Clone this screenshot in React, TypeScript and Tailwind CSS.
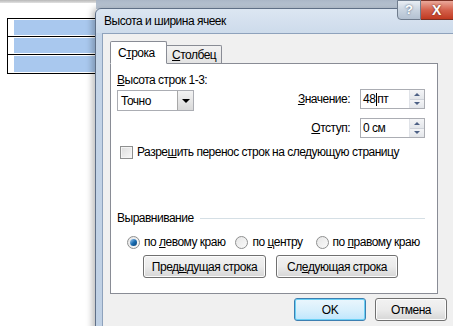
import React from "react";

const font = { fontFamily: '"Segoe UI", "Liberation Sans", Arial, sans-serif' };

const Btn = ({ children, w, focus }: { children: React.ReactNode; w: string; focus?: boolean }) => (
  <div
    className={`${w} h-[23px] rounded-[3px] border ${
      focus ? "border-[#3c7fb1]" : "border-[#707070]"
    } bg-gradient-to-b ${
      focus ? "from-[#eaf6fd] via-[#d9f0fc] to-[#bee6fd]" : "from-[#f2f2f2] via-[#ebebeb] to-[#d6d6d6]"
    } flex items-center justify-center text-[12px] text-black whitespace-nowrap ${
      focus ? "shadow-[inset_0_0_0_1px_#6ad0f5]" : "shadow-[inset_0_0_0_1px_#fcfcfc]"
    }`}
  >
    {children}
  </div>
);

const Radio = ({ on }: { on?: boolean }) => (
  <div className="w-[13px] h-[13px] shrink-0 rounded-full border border-[#8e8f8f] bg-gradient-to-br from-[#e6e6e6] to-[#fafafa] flex items-center justify-center">
    {on && <div className="w-[7px] h-[7px] rounded-full bg-gradient-to-br from-[#9fd0f5] via-[#1b6fb3] to-[#0a3f75]" />}
  </div>
);

const Spin = () => (
  <div className="w-[15px] h-full flex flex-col border-l border-[#e0e3e8]">
    <div className="flex-1 flex items-center justify-center border-b border-[#cfd3da] bg-gradient-to-b from-[#f4f5f7] to-[#e3e6ea]">
      <div className="w-0 h-0 border-l-[3px] border-r-[3px] border-b-[3px] border-l-transparent border-r-transparent border-b-[#4d6185]" />
    </div>
    <div className="flex-1 flex items-center justify-center bg-gradient-to-b from-[#f4f5f7] to-[#e3e6ea]">
      <div className="w-0 h-0 border-l-[3px] border-r-[3px] border-t-[3px] border-l-transparent border-r-transparent border-t-[#4d6185]" />
    </div>
  </div>
);

export default function App() {
  return (
    <div className="relative w-[453px] h-[326px] overflow-hidden bg-white whitespace-nowrap tracking-[-0.5px]" style={font}>
      {/* page behind */}
      <div className="h-[3px] bg-gradient-to-b from-[#b7b7b7] to-[#e2e2e2]" />
      <div className="mt-[15px] ml-[7px] w-[120px] border border-black flex flex-col">
        {[0, 1, 2].map((i) => (
          <div key={i} className={`flex h-[18px] ${i < 2 ? "border-b border-black" : ""}`}>
            <div className="w-[6px]" />
            <div className="flex-1 bg-[#a9c8ee] my-px" />
          </div>
        ))}
      </div>

      {/* dark band above the dialog */}
      <div className="absolute left-[96px] top-0 right-0 h-[9px] bg-gradient-to-b from-[#aab6c6] to-[#c7d3e2]" />

      {/* dialog */}
      <div className="absolute left-[95px] top-[8px] w-[380px] h-[340px] rounded-tl-[6px] border border-[#5f6f86] bg-gradient-to-b from-[#c5d5e8] to-[#bfd0e4] flex flex-col shadow-[-3px_0_6px_rgba(0,0,0,0.25)]">
        <div className="h-[24px] flex items-center pl-[8px] text-[12px] text-black bg-gradient-to-b from-[#dce6f2] to-[#cddbeb] rounded-tl-[6px]">
          Высота и ширина ячеек
        </div>
        <div className="flex-1 ml-[6px] border-l border-t border-[#8ea2bc] bg-[#f0f0f0] pl-[7px] pt-[7px] flex flex-col">
          {/* tabs */}
          <div className="flex items-end h-[22px] text-[12px] text-black relative z-10">
            <div className="w-[57px] h-[23px] -mb-px bg-white border border-[#898c95] border-b-white rounded-t-[2px] flex items-center pl-[7px]">
              С<u>т</u>рока
            </div>
            <div className="w-[55px] h-[18px] border border-l-0 border-b-0 border-[#898c95] rounded-tr-[2px] bg-gradient-to-b from-[#f2f2f2] to-[#e3e3e3] flex items-center pl-[5px]">
              <u>С</u>толбец
            </div>
          </div>
          {/* panel */}
          <div className="w-[328px] h-[231px] bg-white border border-[#898c95] flex flex-col pl-[6px] pr-[12px] pt-[8px] text-[12px] text-black">
            <div className="flex">
              <div className="flex flex-col">
                <div className="h-[16px] leading-[16px]">
                  <u>В</u>ысота строк 1-3:
                </div>
                <div className="mt-[2px] w-[77px] h-[21px] border border-[#abadb3] flex items-stretch">
                  <div className="flex-1 flex items-center pl-[3px]">Точно</div>
                  <div className="w-[16px] border-l border-[#a8a8a8] bg-gradient-to-b from-[#f3f3f3] to-[#d9d9d9] flex items-center justify-center">
                    <div className="w-0 h-0 border-l-[4px] border-r-[4px] border-t-[4px] border-l-transparent border-r-transparent border-t-black" />
                  </div>
                </div>
              </div>
              <div className="flex-1 flex flex-col items-end gap-[9px] mt-[17px]">
                <div className="flex items-center gap-[10px]">
                  <span>
                    <u>З</u>начение:
                  </span>
                  <div className="w-[65px] h-[20px] border border-[#abadb3] flex items-stretch">
                    <div className="flex-1 flex items-center pl-[2px]">
                      48<span className="inline-block w-px h-[13px] bg-black ml-px" />пт
                    </div>
                    <Spin />
                  </div>
                </div>
                <div className="flex items-center gap-[10px]">
                  <span>
                    <u>О</u>тступ:
                  </span>
                  <div className="w-[65px] h-[20px] border border-[#abadb3] flex items-stretch">
                    <div className="flex-1 flex items-center pl-[2px]">0 см</div>
                    <Spin />
                  </div>
                </div>
              </div>
            </div>
            <div className="flex items-center mt-[5px] ml-[3px] gap-[4px]">
              <div className="w-[13px] h-[13px] border border-[#8e8f8f] bg-gradient-to-br from-[#dcdcdc] to-[#f8f8f8] shadow-[inset_0_0_0_1px_#f4f4f4]" />
              <span>
                Разре<u>ш</u>ить перенос строк на следующую страницу
              </span>
            </div>

            <div className="flex items-center mt-[48px] gap-[6px]">
              <span>Выравнивание</span>
              <div className="flex-1 h-px bg-[#d5dfe5]" />
            </div>
            <div className="flex items-center mt-[7px] ml-[10px] h-[16px]">
              <Radio on />
              <span className="ml-[4px]">
                по <u>л</u>евому краю
              </span>
              <div className="ml-[10px]">
                <Radio />
              </div>
              <span className="ml-[4px]">
                по <u>ц</u>ентру
              </span>
              <div className="ml-[13px]">
                <Radio />
              </div>
              <span className="ml-[4px]">
                по <u>п</u>равому краю
              </span>
            </div>
            <div className="flex mt-[5px] ml-[26px] gap-[10px]">
              <Btn w="w-[123px]">
                Пред<u>ы</u>дущая строка
              </Btn>
              <Btn w="w-[122px]">
                Сл<u>е</u>дующая строка
              </Btn>
            </div>
          </div>
          <div className="flex mt-[4px] ml-[184px] gap-[9px]">
            <Btn w="w-[72px]" focus>
              OK
            </Btn>
            <Btn w="w-[72px]">Отмена</Btn>
          </div>
        </div>
      </div>

      {/* caption buttons */}
      <div className="absolute top-0 left-[397px] flex tracking-normal">
        <div className="w-[24px] h-[20px] rounded-bl-[4px] border border-[#6f7c8d] bg-gradient-to-b from-[#e9eef4] via-[#c9d4e0] to-[#b3c1d1] flex items-center justify-center text-[13px] font-bold text-white [text-shadow:0_0_2px_#354a66]">
          ?
        </div>
        <div className="w-[40px] h-[20px] rounded-br-[4px] border border-l-0 border-[#7a3024] bg-gradient-to-b from-[#eaa99b] via-[#d4614c] to-[#c0391f] flex items-center pl-[11px] text-[14px] font-bold text-white [text-shadow:0_0_2px_#5a1a10]">
          X
        </div>
      </div>
    </div>
  );
}
